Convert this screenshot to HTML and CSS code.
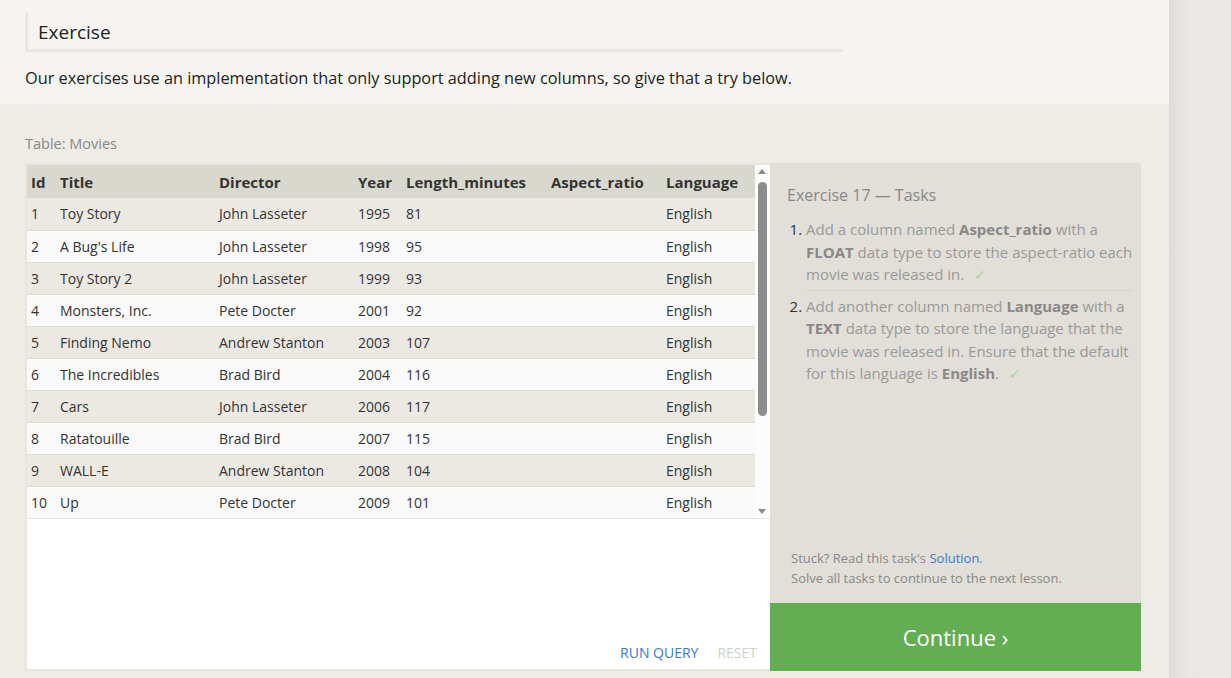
FILE: index.html
```html
<!DOCTYPE html>
<html>
<head>
<meta charset="utf-8">
<link rel="stylesheet" href="styles.css">
</head>
<body>
<div class="page">
  <div class="main">
    <section class="intro">
      <div class="ex-head">Exercise</div>
      <p class="ex-text">Our exercises use an implementation that only support adding new columns, so give that a try below.</p>
    </section>
    <section class="exercise">
      <div class="table-label">Table: Movies</div>
      <div class="widget">
        <div class="data-pane">
          <div class="table-scroll">
            <table class="movies">
              <colgroup>
                <col class="c-id"><col class="c-title"><col class="c-dir"><col class="c-year"><col class="c-len"><col class="c-asp"><col class="c-lang">
              </colgroup>
              <thead>
                <tr><th>Id</th><th>Title</th><th>Director</th><th>Year</th><th>Length_minutes</th><th>Aspect_ratio</th><th>Language</th></tr>
              </thead>
              <tbody>
                <tr><td>1</td><td>Toy Story</td><td>John Lasseter</td><td>1995</td><td>81</td><td></td><td>English</td></tr>
                <tr><td>2</td><td>A Bug's Life</td><td>John Lasseter</td><td>1998</td><td>95</td><td></td><td>English</td></tr>
                <tr><td>3</td><td>Toy Story 2</td><td>John Lasseter</td><td>1999</td><td>93</td><td></td><td>English</td></tr>
                <tr><td>4</td><td>Monsters, Inc.</td><td>Pete Docter</td><td>2001</td><td>92</td><td></td><td>English</td></tr>
                <tr><td>5</td><td>Finding Nemo</td><td>Andrew Stanton</td><td>2003</td><td>107</td><td></td><td>English</td></tr>
                <tr><td>6</td><td>The Incredibles</td><td>Brad Bird</td><td>2004</td><td>116</td><td></td><td>English</td></tr>
                <tr><td>7</td><td>Cars</td><td>John Lasseter</td><td>2006</td><td>117</td><td></td><td>English</td></tr>
                <tr><td>8</td><td>Ratatouille</td><td>Brad Bird</td><td>2007</td><td>115</td><td></td><td>English</td></tr>
                <tr><td>9</td><td>WALL-E</td><td>Andrew Stanton</td><td>2008</td><td>104</td><td></td><td>English</td></tr>
                <tr><td>10</td><td>Up</td><td>Pete Docter</td><td>2009</td><td>101</td><td></td><td>English</td></tr>
              </tbody>
            </table>
            <div class="scrollbar">
              <span class="arrow up"></span>
              <span class="thumb"></span>
              <span class="arrow down"></span>
            </div>
          </div>
          <div class="actions">
            <span class="run">RUN QUERY</span>
            <span class="reset">RESET</span>
          </div>
        </div>
        <aside class="tasks">
          <div class="tasks-body">
            <h3 class="tasks-title">Exercise 17 — Tasks</h3>
            <ol class="task-list">
              <li>Add a column named <b>Aspect_ratio</b> with a <b>FLOAT</b> data type to store the aspect-ratio each movie was released in. <span class="check">✓</span></li>
              <li>Add another column named <b>Language</b> with a <b>TEXT</b> data type to store the language that the movie was released in. Ensure that the default for this language is <b>English</b>. <span class="check">✓</span></li>
            </ol>
          </div>
          <div class="help">
            <div>Stuck? Read this task's <span class="link">Solution</span>.</div>
            <div>Solve all tasks to continue to the next lesson.</div>
          </div>
          <div class="continue">Continue ›</div>
        </aside>
      </div>
    </section>
  </div>
  <div class="side"></div>
</div>
</body>
</html>
```
FILE: styles.css
```css
* { box-sizing: border-box; }
html, body { margin: 0; padding: 0; height: 100%; }
body {
  font-family: "Open Sans", "Noto Sans", sans-serif;
  color: #333;
  overflow: hidden;
}
.page {
  display: flex;
  height: 678px;
  width: 1231px;
}
.main {
  width: 1169px;
  display: flex;
  flex-direction: column;
}
.side {
  flex: 1;
  background: linear-gradient(to right, #dedbd8 0px, #e6e3e0 10px, #eae7e4 24px, #ebe8e5 100%);
}
.intro {
  background: #f5f4f0;
  height: 104px;
  padding: 12px 0 0 25px;
}
.ex-head {
  width: 818px;
  border-left: 3px solid #e8e7e0;
  border-bottom: 3px solid #e8e7e0;
  font-size: 19px;
  padding: 8px 0 5px 10px;
  line-height: 24px;
  color: #222;
}
.ex-text {
  margin: 14px 0 0 0;
  font-size: 16.3px;
  line-height: 24px;
  color: #222;
}
.exercise {
  flex: 1;
  background: #efece6;
  padding: 30px 0 0 25px;
}
.table-label {
  font-size: 14.5px;
  color: #888;
  line-height: 20px;
  margin-bottom: 9px;
}
.widget {
  display: flex;
  width: 1116px;
  height: 508px;
}
.data-pane {
  width: 745px;
  background: #fff;
  border: 2px solid #e8e6df;
  border-right: none;
  display: flex;
  flex-direction: column;
}
.table-scroll {
  display: flex;
  height: 354px;
  border-bottom: 1px solid #e6e4de;
}
.movies {
  width: 728px;
  border-collapse: collapse;
  table-layout: fixed;
  font-size: 14px;
}
.c-id { width: 29px; }
.c-title { width: 159px; }
.c-dir { width: 139px; }
.c-year { width: 48px; }
.c-len { width: 145px; }
.c-asp { width: 115px; }
.c-lang { width: 93px; }
.movies th {
  background: #d9d8cf;
  text-align: left;
  font-weight: 700;
  font-size: 15px;
  color: #333;
  height: 33px;
  padding: 0 0 0 4px;
}
.movies td {
  height: 32px;
  padding: 0 0 0 4px;
  color: #333;
  border-top: 1px solid #dfddd6;
  white-space: nowrap;
}
.movies tbody tr:nth-child(odd) td { background: #ebe9e2; }
.movies tbody tr:nth-child(even) td { background: #f9f9f9; }
.movies tbody tr:first-child td { border-top: none; }
.scrollbar {
  width: 14px;
  background: #fcfcfc;
  display: flex;
  flex-direction: column;
  align-items: center;
  padding: 4px 0 4px;
}
.arrow {
  width: 0;
  height: 0;
  border-left: 4px solid transparent;
  border-right: 4px solid transparent;
}
.arrow.up { border-bottom: 5px solid #8a8a8a; }
.arrow.down { border-top: 5px solid #8a8a8a; margin-top: auto; }
.thumb {
  width: 9px;
  height: 234px;
  margin-top: 8px;
  background: #8c8c8c;
  border-radius: 5px;
}
.actions {
  margin-top: auto;
  display: flex;
  justify-content: flex-end;
  gap: 19px;
  padding: 0 13px 6px 0;
  font-size: 14px;
  line-height: 20px;
}
.run { color: #3b78d8; }
.reset { color: #cfcfcf; }
.tasks {
  width: 371px;
  background: #e1dfd8;
  display: flex;
  flex-direction: column;
}
.tasks-body {
  padding: 20px 8px 0 17px;
}
.tasks-title {
  margin: 0;
  font-weight: 400;
  font-size: 16px;
  color: #888;
  line-height: 24px;
}
.task-list {
  margin: 11px 0 0 0;
  padding: 0 0 0 19px;
  font-size: 15px;
  line-height: 22.5px;
  color: #999;
}
.task-list li::marker { color: #333; }
.task-list li { padding-bottom: 4px; }
.task-list li + li {
  border-top: 1px solid #d5d3cb;
  padding-top: 4px;
}
.task-list b { color: #888; }
.check {
  font-family: "DejaVu Sans", sans-serif;
  font-size: 14px;
  line-height: 1;
  color: #a8d29f;
  margin-left: 6px;
}
.help {
  margin-top: auto;
  padding: 0 0 15px 21px;
  font-size: 13px;
  line-height: 20px;
  color: #888;
}
.link { color: #3b78d8; }
.continue {
  height: 68px;
  background: #63ae52;
  color: #fff;
  font-size: 22px;
  display: flex;
  align-items: center;
  justify-content: center;
}
```
